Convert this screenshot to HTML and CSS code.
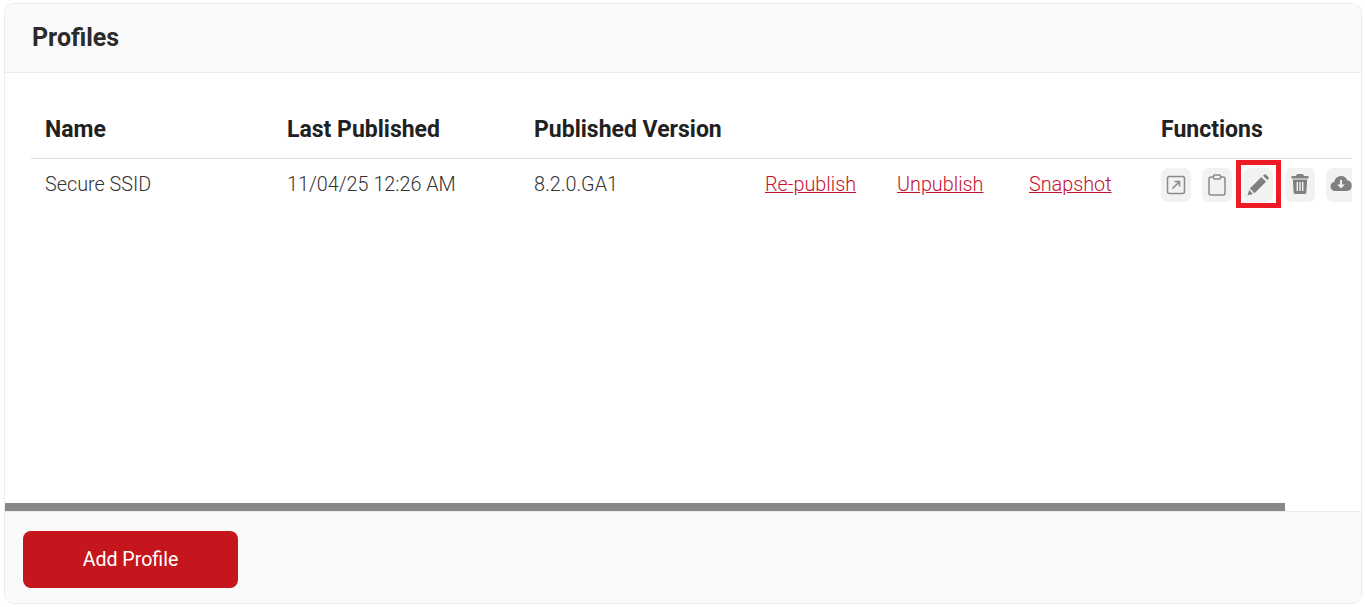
FILE: index.html
```html
<!DOCTYPE html>
<html lang="en">
<head>
<meta charset="utf-8">
<title>Profiles</title>
<link rel="stylesheet" href="styles.css">
</head>
<body>
<section class="card">
  <header class="card-head"><h1>Profiles</h1></header>
  <div class="card-body">
    <div class="scroller">
      <table class="profiles">
        <colgroup>
          <col class="c-name"><col class="c-date"><col class="c-ver"><col class="c-a1"><col class="c-a2"><col class="c-a3"><col class="c-fn">
        </colgroup>
        <thead>
          <tr><th>Name</th><th>Last Published</th><th>Published Version</th><th></th><th></th><th></th><th>Functions</th></tr>
        </thead>
        <tbody>
          <tr>
            <td>Secure SSID</td>
            <td>11/04/25 12:26 AM</td>
            <td>8.2.0.GA1</td>
            <td><a href="#">Re-publish</a></td>
            <td><a href="#">Unpublish</a></td>
            <td><a href="#">Snapshot</a></td>
            <td>
              <div class="fns">
                <span class="fn"><svg viewBox="0 0 20 20" width="20" height="20"><rect x="1.5" y="1.5" width="17" height="17" rx="2" fill="none" stroke="#8a8a8a" stroke-width="1.5"/><path d="M6.5 13.5 13 7M8.5 6.5H13.5V11.5" fill="none" stroke="#8a8a8a" stroke-width="1.6"/></svg></span>
                <span class="fn"><svg viewBox="0 0 20 22" width="20" height="22"><path d="M6.5 3H4a2 2 0 0 0-2 2v14a2 2 0 0 0 2 2h12a2 2 0 0 0 2-2V5a2 2 0 0 0-2-2h-2.5" fill="none" stroke="#8a8a8a" stroke-width="1.5"/><rect x="6.5" y="1" width="7" height="4" rx="1" fill="none" stroke="#8a8a8a" stroke-width="1.5"/></svg></span>
                <span class="fn hl"><svg viewBox="0 0 22 22" width="22" height="22"><path d="M16 1.7 17 .7a1.4 1.4 0 0 1 2 0l2.3 2.3a1.4 1.4 0 0 1 0 2L20.3 6ZM14.3 3 19 7.7 7.5 19.2 2.8 14.5ZM2.1 15.9 6.1 19.9 .5 21.5Z" fill="#808080"/></svg></span>
                <span class="fn"><svg class="up" viewBox="0 0 18 20" width="18" height="20"><path fill-rule="evenodd" d="M6 0h6l1 2h4.5v2.4H.5V2H5ZM1.8 5.4h14.4l-.9 13A1.7 1.7 0 0 1 13.6 20H4.4a1.7 1.7 0 0 1-1.7-1.6ZM5.6 8v9h1.4V8ZM8.3 8v9h1.4V8ZM11 8v9h1.4V8Z" fill="#808080"/></svg></span>
                <span class="fn"><svg class="up" viewBox="0 0 22 15" width="22" height="15"><path fill-rule="evenodd" d="M11.5 0a6 6 0 0 1 5.6 4.3A5.4 5.4 0 0 1 17 15H5a4.6 4.6 0 0 1-.8-9.1A6.8 6.8 0 0 1 11.5 0ZM10 4v4.5H7.2l3.8 4 3.8-4H12V4Z" fill="#808080"/></svg></span>
              </div>
            </td>
          </tr>
        </tbody>
      </table>
    </div>
    <div class="scrollbar"><div class="thumb"></div></div>
  </div>
  <footer class="card-foot"><button class="add" type="button">Add Profile</button></footer>
</section>
</body>
</html>
```
FILE: styles.css
```css
* { box-sizing: border-box; }
html, body { margin: 0; height: 100%; }
body {
  padding: 3px 3px 3px 4px;
  background: #fff;
  font-family: Roboto, "Liberation Sans", sans-serif;
  color: #212121;
  overflow: hidden;
}
.card {
  display: flex;
  flex-direction: column;
  height: 601px;
  border: 1px solid #ececec;
  border-radius: 10px;
  overflow: hidden;
  background: #fff;
}
.card-head {
  height: 69px;
  flex: none;
  padding: 0 27px 1px;
  display: flex;
  align-items: center;
  background: #fafafa;
  border-bottom: 1px solid #ececec;
}
.card-head h1 {
  margin: 0;
  font-size: 25px;
  font-weight: 700;
  color: #2a2a2a;
}
.card-body {
  flex: 1;
  display: flex;
  flex-direction: column;
  min-height: 0;
}
.scroller {
  flex: 1;
  min-height: 0;
  margin: 0 9px 0 26px;
  padding-top: 29px;
  overflow: hidden;
}
.profiles {
  border-collapse: collapse;
  table-layout: fixed;
  width: 1386px;
}
.c-name { width: 242px; }
.c-date { width: 247px; }
.c-ver { width: 231px; }
.c-a1 { width: 132px; }
.c-a2 { width: 132px; }
.c-a3 { width: 132px; }
.c-fn { width: 270px; }
.profiles th {
  height: 56px;
  padding: 0 14px;
  text-align: left;
  font-size: 23px;
  font-weight: 700;
  color: #212121;
  border-bottom: 1px solid #dcdcdc;
}
.profiles td {
  height: 52px;
  padding: 0 14px;
  font-size: 19.8px;
  font-weight: 300;
  color: #333;
  vertical-align: middle;
}
.profiles a { color: #c8102e; }
.fns { display: flex; gap: 11.2px; padding-top: 2px; }
.fn {
  position: relative;
  flex: none;
  width: 30px;
  height: 34px;
  display: flex;
  align-items: center;
  justify-content: center;
  background: #f2f2f2;
  border-radius: 7px;
}
.hl::after {
  content: "";
  position: absolute;
  inset: -8px -8px -6px -7px;
  border: 5px solid #ed1c24;
}
.up { margin-bottom: 3px; }
.scrollbar { flex: none; height: 8px; }
.thumb { width: 1280px; height: 8px; background: #888; }
.card-foot {
  flex: none;
  height: 92px;
  padding: 19px 18px;
  background: #fafafa;
  border-top: 1px solid #ececec;
}
.add {
  display: block;
  width: 215px;
  height: 57px;
  padding: 0 0 1px;
  border: 0;
  border-radius: 8px;
  background: #c4161c;
  color: #fff;
  font-family: inherit;
  font-size: 19.6px;
  font-weight: 400;
}
```
